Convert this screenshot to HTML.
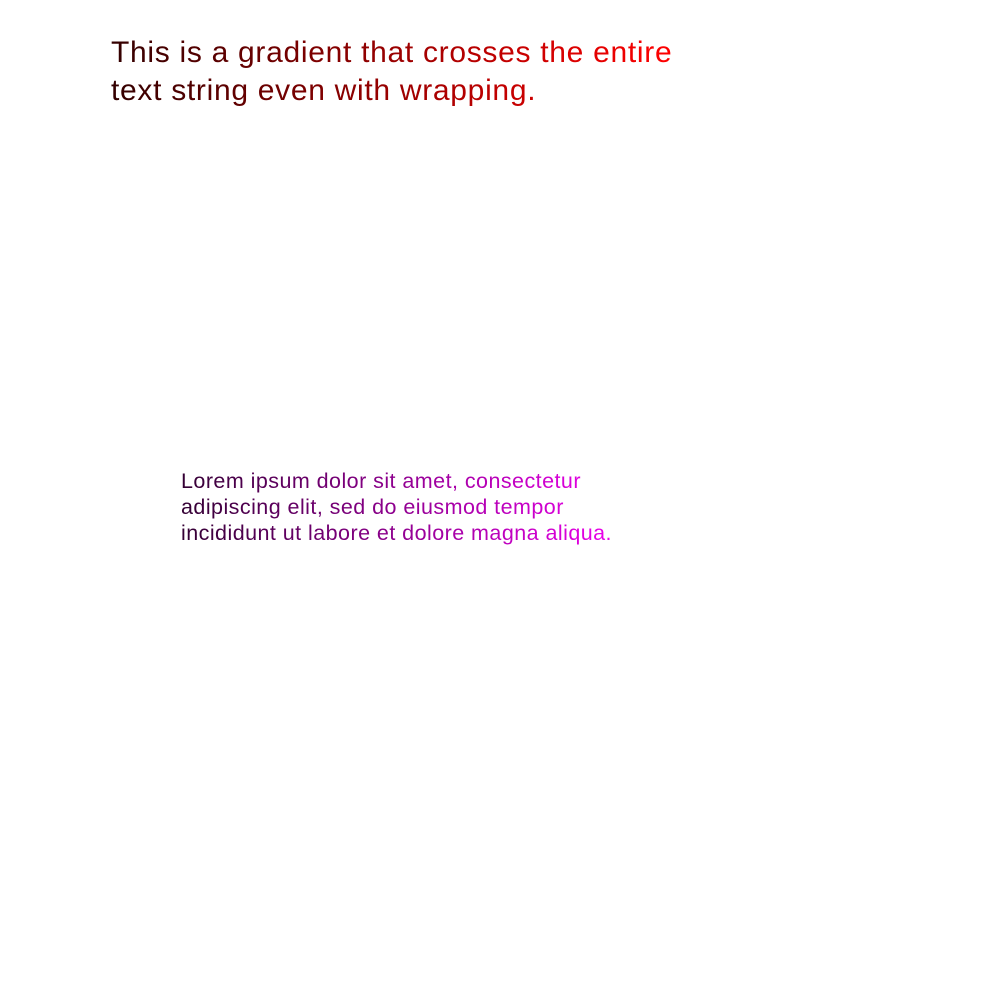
<!DOCTYPE html>
<html><head><style>
body{margin:0;width:1000px;height:1000px;background:#fff;font-family:"Liberation Sans",sans-serif;position:relative}
.t{position:absolute;-webkit-background-clip:text;background-clip:text;color:transparent;-webkit-text-fill-color:transparent}
#a{left:111px;top:34px;width:590px;font-size:30px;letter-spacing:0.7px;line-height:38px;background-image:linear-gradient(to right,#300,#f00 95%)}
#b{left:181px;top:468px;width:436px;font-size:21.5px;letter-spacing:0.45px;line-height:26px;background-image:linear-gradient(to right,#303,#e0e)}
</style></head><body>
<div class="t" id="a">This is a gradient that crosses the entire text string even with wrapping.</div>
<div class="t" id="b">Lorem ipsum dolor sit amet, consectetur adipiscing elit, sed do eiusmod tempor incididunt ut labore et dolore magna aliqua.</div>
</body></html>
